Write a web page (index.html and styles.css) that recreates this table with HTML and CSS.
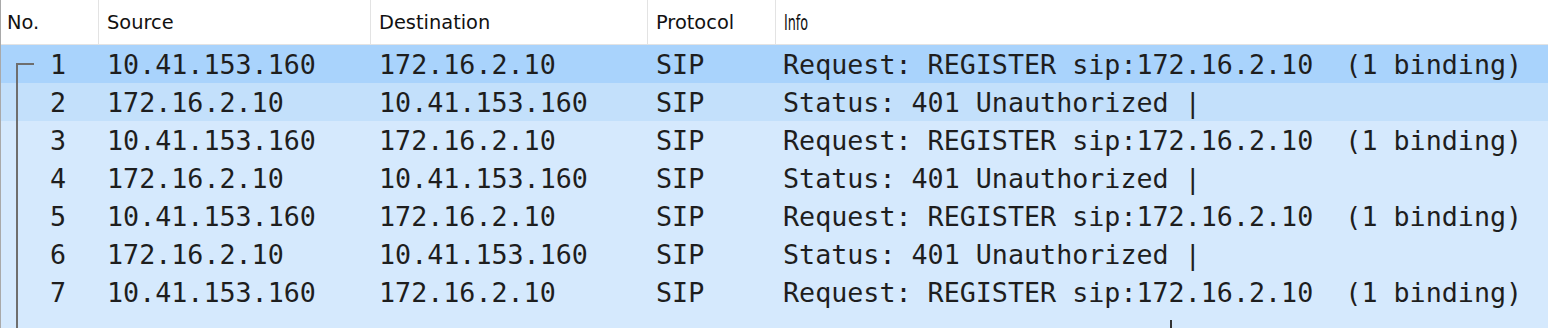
FILE: index.html
```html
<!DOCTYPE html>
<html lang="en">
<head>
    <meta charset="UTF-8">
    <title>Packet list</title>
    <link rel="stylesheet" href="styles.css">
</head>
<body>
    <div class="packet-list">
        <div class="row header">
            <div class="cell no">No.</div>
            <div class="cell">Source</div>
            <div class="cell">Destination</div>
            <div class="cell">Protocol</div>
            <div class="cell info"><span class="narrow">Info</span></div>
        </div>
        <div class="rows">
            <div class="tree-line"></div>
            <div class="row packet selected">
                <div class="cell no">1</div>
                <div class="cell">10.41.153.160</div>
                <div class="cell">172.16.2.10</div>
                <div class="cell">SIP</div>
                <div class="cell info">Request: REGISTER sip:172.16.2.10  (1 binding)</div>
            </div>
            <div class="row packet related">
                <div class="cell no">2</div>
                <div class="cell">172.16.2.10</div>
                <div class="cell">10.41.153.160</div>
                <div class="cell">SIP</div>
                <div class="cell info">Status: 401 Unauthorized |</div>
            </div>
            <div class="row packet">
                <div class="cell no">3</div>
                <div class="cell">10.41.153.160</div>
                <div class="cell">172.16.2.10</div>
                <div class="cell">SIP</div>
                <div class="cell info">Request: REGISTER sip:172.16.2.10  (1 binding)</div>
            </div>
            <div class="row packet">
                <div class="cell no">4</div>
                <div class="cell">172.16.2.10</div>
                <div class="cell">10.41.153.160</div>
                <div class="cell">SIP</div>
                <div class="cell info">Status: 401 Unauthorized |</div>
            </div>
            <div class="row packet">
                <div class="cell no">5</div>
                <div class="cell">10.41.153.160</div>
                <div class="cell">172.16.2.10</div>
                <div class="cell">SIP</div>
                <div class="cell info">Request: REGISTER sip:172.16.2.10  (1 binding)</div>
            </div>
            <div class="row packet">
                <div class="cell no">6</div>
                <div class="cell">172.16.2.10</div>
                <div class="cell">10.41.153.160</div>
                <div class="cell">SIP</div>
                <div class="cell info">Status: 401 Unauthorized |</div>
            </div>
            <div class="row packet">
                <div class="cell no">7</div>
                <div class="cell">10.41.153.160</div>
                <div class="cell">172.16.2.10</div>
                <div class="cell">SIP</div>
                <div class="cell info">Request: REGISTER sip:172.16.2.10  (1 binding)</div>
            </div>
            <div class="row partial">
                <div class="cell no"></div>
                <div class="cell"></div>
                <div class="cell"></div>
                <div class="cell"></div>
                <div class="cell info"><span class="pipe-stub"></span></div>
            </div>
        </div>
    </div>
</body>
</html>
```

FILE: styles.css
```css
* {
    box-sizing: border-box;
    margin: 0;
    padding: 0;
}

body {
    background: #d5e9fd;
    overflow: hidden;
}

.packet-list {
    height: 328px;
    overflow: hidden;
    border-left: 1px solid #a9a9a9;
    background: #d5e9fd;
}

.row {
    display: grid;
    grid-template-columns: 98px 272px 277px 128px 1fr;
}

.header {
    height: 45px;
    background: #fff;
    border-bottom: 1px solid #e3e3e3;
    font-family: 'DejaVu Sans', sans-serif;
    font-size: 19.4px;
    color: #111;
}

.header .cell {
    display: flex;
    align-items: center;
    padding-left: 8px;
    border-right: 1px solid #e3e3e3;
}

.header .cell.no {
    padding-left: 6px;
}

.header .cell.info {
    border-right: none;
}

.narrow {
    display: inline-block;
    transform: scaleX(0.58);
    transform-origin: left center;
    font-size: 22px;
}

.rows {
    position: relative;
}

.packet {
    height: 38px;
    align-items: center;
    font-family: 'DejaVu Sans Mono', monospace;
    font-size: 26.7px;
    color: #1e1e1e;
    white-space: pre;
}

.packet .cell {
    padding-left: 8px;
}

.packet .cell.no {
    text-align: right;
    padding-right: 33px;
}

.packet .cell.info {
    padding-left: 7px;
}

.selected {
    background: #a9d3fc;
}

.related {
    background: #c3e0fb;
}

/* next row, only its top edge is in view */
.partial {
    height: 17px;
}

.pipe-stub {
    display: block;
    width: 2px;
    height: 8px;
    margin: 9px 0 0 394px;
    background: #333;
}

/* conversation bracket in the No. column */
.tree-line {
    position: absolute;
    left: 15px;
    top: 18px;
    bottom: 0;
    width: 18px;
    border-left: 2px solid #6e6e6e;
    border-top: 2px solid #6e6e6e;
    z-index: 1;
}
```
